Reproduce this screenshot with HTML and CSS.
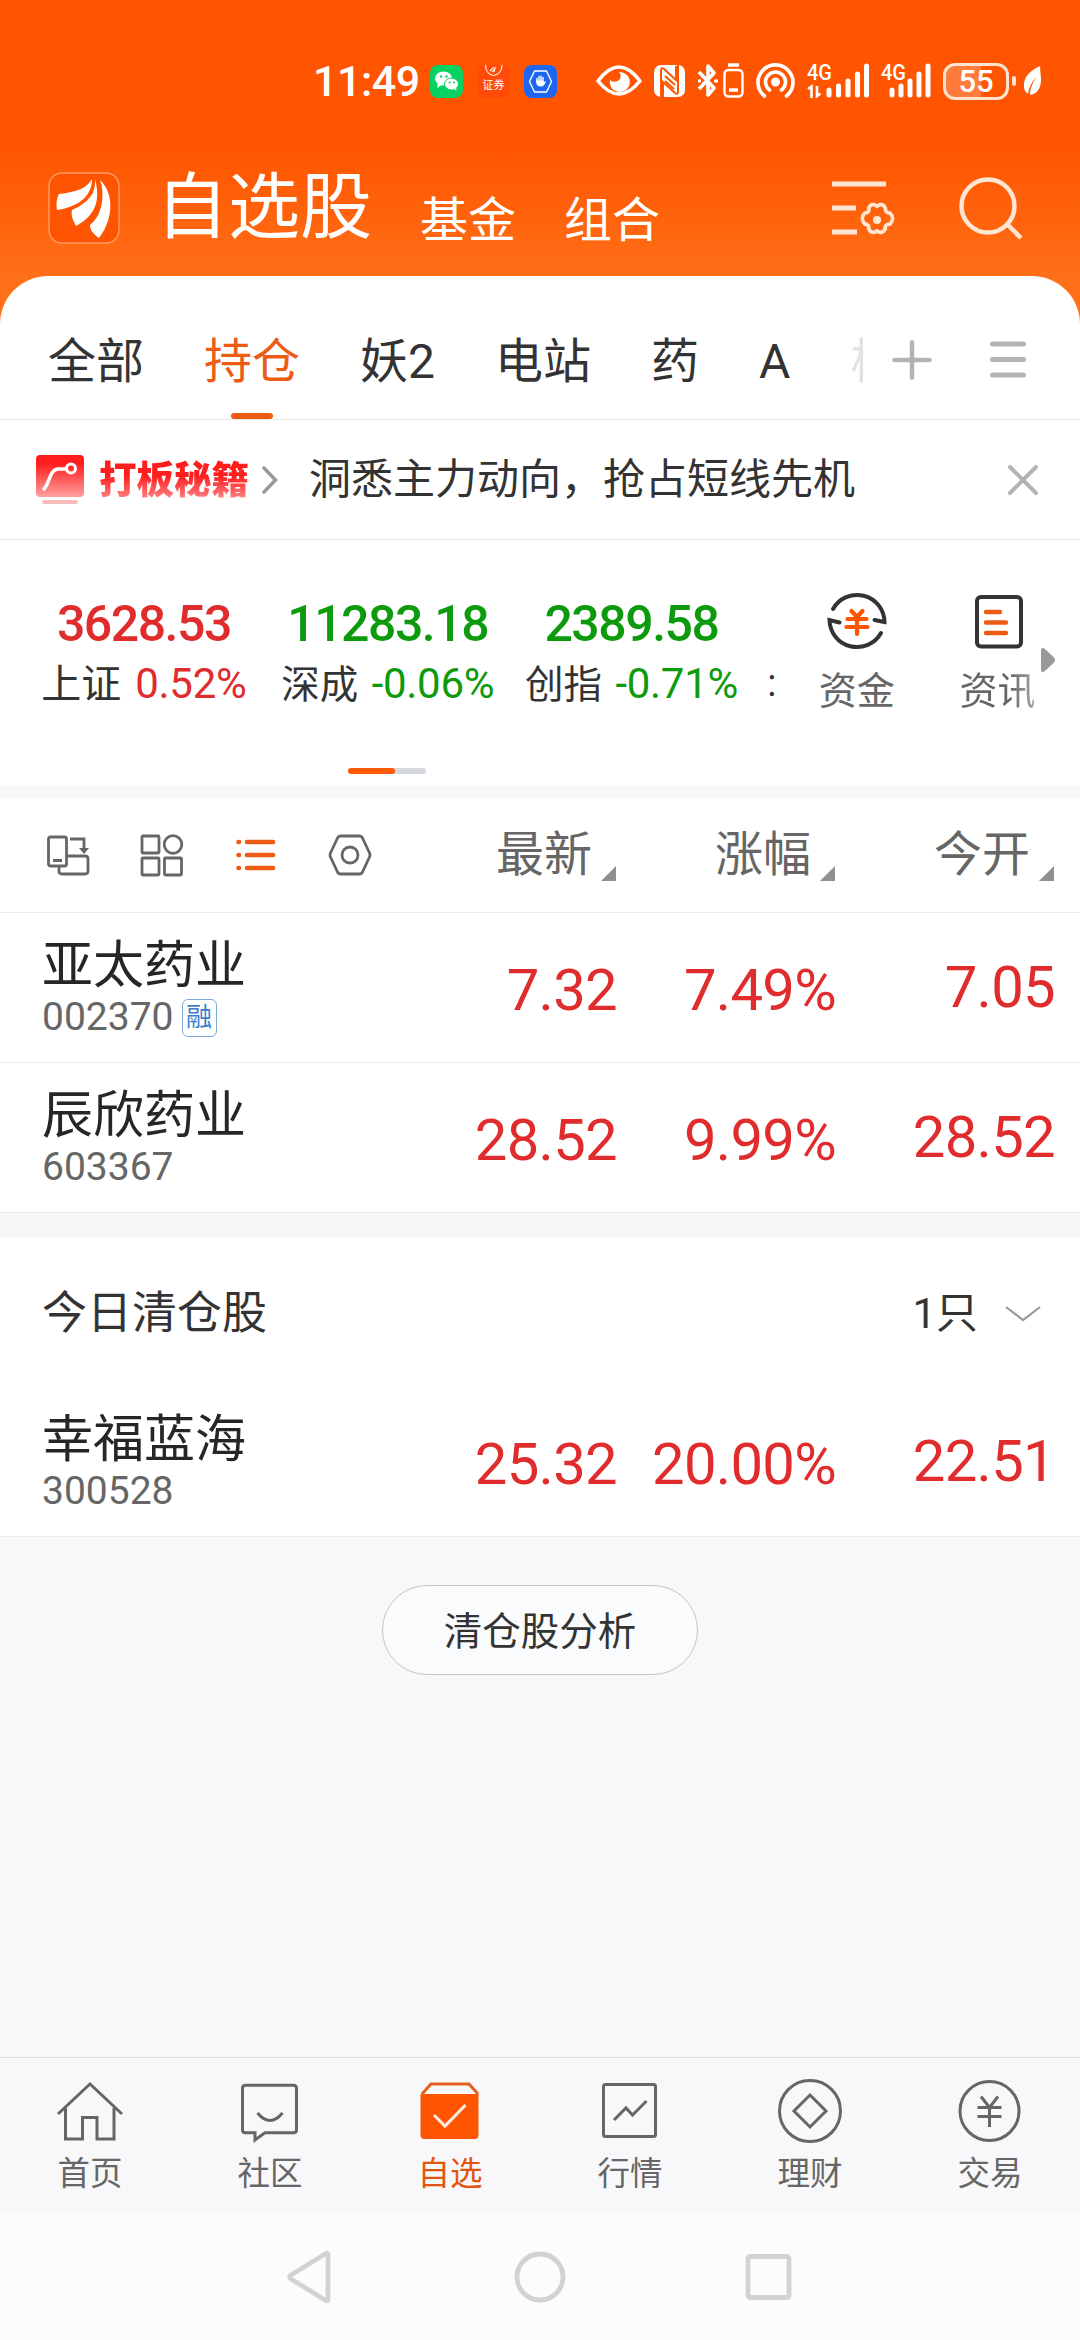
FILE: index.html
```html
<!DOCTYPE html>
<html lang="zh-CN">
<head>
    <meta charset="UTF-8">
    <meta name="viewport" content="width=device-width, initial-scale=1.0">
    <title>自选股</title>
    <link rel="stylesheet" href="styles.css">
</head>
<body>
    <div class="top">
        <div class="status-bar">
            <span class="time">11:49</span>
            <svg class="app-icon" viewBox="0 0 33 33">
                <rect width="33" height="33" rx="8" fill="#07d160"/>
                <ellipse cx="13.500" cy="13.500" rx="8.500" ry="7" fill="#fff"/>
                <path d="M8 18l-1 5 5-3z" fill="#fff"/>
                <ellipse cx="21.500" cy="19" rx="7" ry="6" fill="#fff" stroke="#07d160" stroke-width="1"/>
                <path d="M24 24l2.500 2-.5-4z" fill="#fff"/>
                <circle cx="11" cy="11.500" r="1.200" fill="#07d160"/><circle cx="16.500" cy="11.500" r="1.200" fill="#07d160"/>
                <circle cx="19.500" cy="17.500" r="1" fill="#07d160"/><circle cx="24" cy="17.500" r="1" fill="#07d160"/>
            </svg>
            <span class="app-icon broker">
                <svg viewBox="0 0 33 12"><path d="M8.500 0c0 6 3 9.500 8 10.500 5-1 8.500-4.500 8.500-10.500M13 6l4-4M15 7l4-5M17 7l1-3" fill="none" stroke="#ffe8da" stroke-width="1.200"/></svg>
                <span>证券</span>
            </span>
            <svg class="app-icon" viewBox="0 0 33 33">
                <rect width="33" height="33" rx="8" fill="#1d66f2"/>
                <path d="M10.500 6h12l5 10.500-5 10.500h-12L5.500 16.500z" fill="none" stroke="#fff" stroke-width="1.400" stroke-linejoin="round"/>
                <path d="M13 17v-3.500M15 16v-4.500M17 16v-4.800M19 17v-4.500" stroke="#fff" stroke-width="1.400" stroke-linecap="round"/>
                <path d="M12.300 15.500h7.400v2l1.500-1.500c1 .2.600 1.200 0 2-.8 1.800-1.800 3.500-4.200 3.500-3 0-4.700-1.500-4.700-4z" fill="#fff"/>
            </svg>
            <svg class="st-eye" width="46" height="40" viewBox="0 0 46 40">
                <path d="M2 20Q23-8 44 20Q23 46 2 20z" fill="none" stroke="#fff" stroke-width="3.500" stroke-linejoin="round"/>
                <path d="M23 11a10 10 0 1 1-9 8c3 3 8 2 10-1 1-3 1-5-1-7z" fill="#fff"/>
            </svg>
            <svg class="st-nfc" width="31" height="40" viewBox="0 0 31 40">
                <rect y="4" width="31" height="32" rx="7" fill="#fff"/>
                <path d="M7 36V9q0-3 3-1l12 11V5" fill="none" stroke="#ff5500" stroke-width="2"/>
                <path d="M24 4v27q0 3-3 1L9 21v15M11 15l10 9M11 20l9 8" fill="none" stroke="#ff5500" stroke-width="2"/>
            </svg>
            <svg class="st-bt" width="47" height="40" viewBox="0 0 47 40">
                <path d="M2 11l15 16-6 7V5l6 7L2 28" fill="none" stroke="#fff" stroke-width="3.600" stroke-linejoin="round"/>
                <path d="M1 20h3M17 20h4" stroke="#fff" stroke-width="3"/>
                <rect x="27.500" y="9" width="18" height="26.500" rx="4" fill="none" stroke="#fff" stroke-width="2.400"/>
                <path d="M31 4h11M32 29h9" stroke="#fff" stroke-width="3.500"/>
            </svg>
            <svg class="st-hot" width="39" height="40" viewBox="0 0 39 40">
                <circle cx="19.500" cy="21" r="4.500" fill="#fff"/>
                <path d="M13.500 29a10 10 0 1 1 12 0M8.500 35a17.500 17.500 0 1 1 22 0" fill="none" stroke="#fff" stroke-width="3.600" stroke-linecap="round"/>
            </svg>
            <svg class="st-sig" width="62" height="40" viewBox="0 0 62 40">
                <text x="0" y="19" class="sig-text" textLength="25" lengthAdjust="spacingAndGlyphs">4G</text>
                <path d="M1 28l3.500-2.500V37M10 25v10l3.500-2.500" fill="none" stroke="#fff" stroke-width="2.600"/>
                <path d="M22 29v5M31.500 25v9M41 20v14M50.500 13v21M59.500 5v29" stroke="#fff" stroke-width="5" stroke-linecap="round"/>
            </svg>
            <svg class="st-sig" width="50" height="40" viewBox="0 0 50 40">
                <text x="0" y="19" class="sig-text" textLength="25" lengthAdjust="spacingAndGlyphs">4G</text>
                <path d="M11 29v5M20 25v9M29 20v14M38 13v21M47 5v29" stroke="#fff" stroke-width="5" stroke-linecap="round"/>
            </svg>
            <div class="battery"><span>55</span></div>
            <i class="battery-tip"></i>
            <svg class="st-leaf" width="19" height="40" viewBox="0 0 19 40">
                <path d="M17 5C6 10 0 17 1 26c0 3 2 6 4 7 1-7 4-12 8-17-3 6-6 11-6 18 8-1 11-8 11-15 0-5-1-9-1-14z" fill="#fff"/>
            </svg>
        </div>

        <div class="header">
            <svg class="logo" width="72" height="72" viewBox="0 0 72 72">
                <rect x="1" y="1" width="70" height="70" rx="13" fill="#ff5500" stroke="#ff9a63" stroke-width="1.500"/>
                <path d="M44 7C44 22 34 34 9 38C8 30 9 26 11 22C29 20 39 16 44 7z" fill="#fff"/>
                <path d="M47 7C53 29 47 44 28 54C24 46 23 43 24 38C42 30 48 20 47 7z" fill="#fff"/>
                <path d="M52 8C67 22 65 48 51 66C44 61 42 57 42 53C55 43 57 22 52 8z" fill="#fff"/>
            </svg>
            <h1>自选股</h1>
            <span class="sub-title">基金</span>
            <span class="sub-title">组合</span>
            <svg class="head-set" width="70" height="60" viewBox="0 0 70 60">
                <g fill="none" stroke="#ffe6d2" stroke-width="5">
                    <path d="M5 6h54M5 30h24M5 54h25"/>
                    <path stroke-width="4" stroke-linejoin="round" d="M50 28c3-3 7-3 9 2 0 3 1 5 5 5 4 4 4 7 0 12-4 0-6 2-5 5-2 4-6 5-9 2-3 3-7 2-9-2 1-3-1-5-4-5-4-5-4-8 0-12 3 0 5-2 4-5 2-5 6-5 9-2z" transform="translate(3.500 2.500) scale(.93)"/>
                </g>
                <circle cx="50" cy="42" r="4" fill="#ffe6d2"/>
            </svg>
            <svg class="head-search" width="70" height="66" viewBox="0 0 70 66">
                <circle cx="32" cy="30" r="26.500" fill="none" stroke="#ffe6d2" stroke-width="4.500"/>
                <path d="M51 48l14 14" stroke="#ffe6d2" stroke-width="4.500"/>
            </svg>
        </div>
    </div>

    <div class="panel">
        <div class="tabs">
            <div class="tab-list">
                <span>全部</span>
                <span class="active">持仓</span>
                <span>妖2</span>
                <span>电站</span>
                <span>药</span>
                <span>A</span>
                <span class="fade">板</span>
            </div>
            <svg class="tab-add" width="40" height="40" viewBox="0 0 40 40"><path d="M2.500 20h35M20 2.500v35" stroke="#b3b3b3" stroke-width="4.500" stroke-linecap="round"/></svg>
            <svg class="tab-menu" width="36" height="40" viewBox="0 0 36 40"><path d="M2.500 4h31M2.500 19.500h31M2.500 35h31" stroke="#b3b3b3" stroke-width="5" stroke-linecap="round"/></svg>
        </div>

        <div class="notice">
            <svg width="48" height="50" viewBox="0 0 48 50">
                <defs>
                    <linearGradient id="red" x1="0" y1="0" x2="0" y2="1">
                        <stop offset=".2" stop-color="#ff1d1d"/>
                        <stop offset="1" stop-color="#ffa0a0"/>
                    </linearGradient>
                </defs>
                <rect width="48" height="42" rx="4" fill="url(#red)"/>
                <path d="M8 34c6-6 5-19 14-20h8" fill="none" stroke="#fff" stroke-width="3.500" stroke-linecap="round"/>
                <circle cx="35" cy="13.500" r="4.500" fill="none" stroke="#fff" stroke-width="3"/>
                <rect x="6" y="45" width="36" height="4" rx="2" fill="#f9bcbc"/>
            </svg>
            <b>打板秘籍</b>
            <svg class="notice-go" width="16" height="28" viewBox="0 0 16 28"><path d="M2 2l11.500 12L2 26" fill="none" stroke="#999" stroke-width="3.500" stroke-linecap="round"/></svg>
            <p>洞悉主力动向，抢占短线先机</p>
            <svg class="notice-close" width="30" height="30" viewBox="0 0 30 30"><path d="M2 2l26 26M28 2L2 28" stroke="#b3b3b3" stroke-width="4" stroke-linecap="round"/></svg>
        </div>

        <div class="indexes">
            <div class="index up">
                <strong>3628.53</strong>
                <p>上证 <em>0.52%</em></p>
            </div>
            <div class="index down">
                <strong>11283.18</strong>
                <p>深成 <em>-0.06%</em></p>
            </div>
            <div class="index down">
                <strong>2389.58</strong>
                <p>创指 <em>-0.71%</em></p>
            </div>
            <div class="cut">:</div>
            <div class="quick">
                <svg width="60" height="60" viewBox="0 0 60 60">
                    <path d="M6 18a27.500 27.500 0 0 1 51.500 13l-10-2M54 42A27.500 27.500 0 0 1 2.500 29l10 2.500" fill="none" stroke="#333" stroke-width="4" stroke-linecap="round"/>
                    <path d="M24.500 20l5.500 6 5.500-6M20.500 28h19M19.500 36h21M30 27v16" fill="none" stroke="#ff5500" stroke-width="4.200" stroke-linecap="round"/>
                </svg>
                <span>资金</span>
            </div>
            <div class="quick">
                <svg width="60" height="60" viewBox="0 0 60 60">
                    <rect x="9" y="6" width="44" height="49.500" rx="4" fill="none" stroke="#333" stroke-width="4"/>
                    <path d="M18 21h14M18 31.500h20M18 42h20" stroke="#ec5c14" stroke-width="4.400" stroke-linecap="round"/>
                </svg>
                <span class="last">资讯</span>
            </div>
            <svg class="more" width="16" height="26" viewBox="0 0 16 26"><path d="M1 4q0-5 4-2l9 8.500q2 2.500 0 5L5 24q-4 3-4-2z" fill="#999"/></svg>
            <div class="pager"><i></i></div>
        </div>

        <div class="cols">
            <div class="views">
                <svg width="44" height="44" viewBox="0 0 44 44"><g fill="none" stroke="#666" stroke-width="2.800">
                    <rect x="2.500" y="4" width="18" height="29" rx="2"/><path d="M7 27.500h9M21 23h18q3 0 3 3v12q0 3-3 3H16q-3 0-3-3v-4M24 6h14v12"/></g><path d="M33 15h10l-5 6z" fill="#666"/></svg>
                <svg width="44" height="44" viewBox="0 0 44 44"><g fill="none" stroke="#666" stroke-width="2.800">
                    <rect x="2" y="3" width="17" height="17" rx="1"/><circle cx="33" cy="11.500" r="8.800"/><rect x="2" y="25" width="17" height="17" rx="1"/><rect x="24.500" y="25" width="17" height="17" rx="1"/></g></svg>
                <svg width="44" height="44" viewBox="0 0 44 44"><path d="M13 9h26M13 22h26M13 35h26M4.500 9h.5M4.500 22h.5M4.500 35h.5" stroke="#ec5c14" stroke-width="4.600" stroke-linecap="round"/></svg>
                <svg width="44" height="44" viewBox="0 0 44 44"><path d="M12.500 3h19q2 0 3 2l7 15q1 2 0 4l-7 15q-1 2-3 2h-19q-2 0-3-2l-7-15q-1-2 0-4l7-15q1-2 3-2z" fill="none" stroke="#666" stroke-width="2.800"/><circle cx="22" cy="22" r="8" fill="none" stroke="#666" stroke-width="2.800"/></svg>
            </div>
            <span class="col">最新</span>
            <span class="col">涨幅</span>
            <span class="col">今开</span>
        </div>

        <div class="row">
            <div class="stock">
                <h2>亚太药业</h2>
                <p>002370<span class="tag">融</span></p>
            </div>
            <span class="num">7.32</span>
            <span class="num">7.49%</span>
            <span class="num">7.05</span>
        </div>
        <div class="row">
            <div class="stock">
                <h2>辰欣药业</h2>
                <p>603367</p>
            </div>
            <span class="num">28.52</span>
            <span class="num">9.99%</span>
            <span class="num">28.52</span>
        </div>

        <div class="cleared">
            <span>今日清仓股</span>
            <span class="count">1只</span>
            <svg width="36" height="18" viewBox="0 0 36 18"><path d="M1 2l17 13L35 2" fill="none" stroke="#999" stroke-width="2.200"/></svg>
        </div>
        <div class="row">
            <div class="stock">
                <h2>幸福蓝海</h2>
                <p>300528</p>
            </div>
            <span class="num">25.32</span>
            <span class="num">20.00%</span>
            <span class="num">22.51</span>
        </div>
    </div>

    <div class="blank">
        <button>清仓股分析</button>
    </div>

    <div class="nav">
        <div class="nav-item">
            <svg viewBox="0 0 70 70"><path d="M3 38L35 8l32 30M10.500 32v31H27.500V41.500h14.500V63H59V32"/></svg>
            <span>首页</span>
        </div>
        <div class="nav-item">
            <svg viewBox="0 0 70 70"><path d="M10.500 9.300h48q3 0 3 3v41.500q0 3-3 3H30L20 64v-7.200h-9.500q-3 0-3-3V12.300q0-3 3-3zM22.500 37q12.500 15 25 0"/></svg>
            <span>社区</span>
        </div>
        <div class="nav-item active">
            <svg viewBox="0 0 70 70">
                <path d="M7 18l9-10h38l9 10" stroke="#e2601f"/>
                <path d="M5.500 18h58v41q0 4-4 4h-50q-4 0-4-4z" fill="#ff5500" stroke="none"/>
                <path d="M19 39l11 11 20.500-21" stroke="#ffece0"/>
            </svg>
            <span>自选</span>
        </div>
        <div class="nav-item">
            <svg viewBox="0 0 70 70"><rect x="8.500" y="8.500" width="52" height="52" rx="2"/><path d="M19 44l12-12 6.500 7L51.500 25"/></svg>
            <span>行情</span>
        </div>
        <div class="nav-item">
            <svg viewBox="0 0 70 70"><circle cx="35" cy="35" r="30.500"/><path d="M35 19l16 16-16 16-16-16z"/></svg>
            <span>理财</span>
        </div>
        <div class="nav-item">
            <svg viewBox="0 0 70 70"><circle cx="34.500" cy="35" r="29.500"/><path d="M26 20.500l8.500 11 8.500-11M22.500 31.500h24M22.500 40.500h24M34.500 31v20"/></svg>
            <span>交易</span>
        </div>
    </div>

    <div class="sys-nav">
        <svg viewBox="0 0 56 56"><path d="M42 5q3-2 3 1v44q0 3-3 1L8 30q-3-2 0-4z"/></svg>
        <svg viewBox="0 0 56 56"><circle cx="28" cy="28" r="23"/></svg>
        <svg viewBox="0 0 56 56"><rect x="7" y="7.500" width="41" height="41" rx="2"/></svg>
    </div>
</body>
</html>
```

FILE: styles.css
```css
* {
    box-sizing: border-box;
    margin: 0;
    padding: 0;
}
body {
    width: 1080px;
    height: 2340px;
    overflow: hidden;
    display: flex;
    flex-direction: column;
    background: #f7f8fa;
    color: #333;
    font-family: Roboto, "Noto Sans CJK SC", sans-serif;
}
svg {
    display: block;
    flex-shrink: 0;
}

/* orange top */
.top {
    height: 324px;
    margin-bottom: -48px;
    background: linear-gradient(#ff5500 150px, #ff6f18 276px);
}
.status-bar {
    height: 140px;
    padding: 22px 0 0 313px;
    display: flex;
    align-items: center;
    color: #fff;
}
.time {
    width: 117px;
    font-size: 43px;
    font-weight: 500;
    line-height: 40px;
    letter-spacing: -0.5px;
}
.app-icon {
    width: 33px;
    height: 33px;
    margin-right: 14px;
}
.broker {
    display: block;
    background: #ff4a08;
    border-radius: 8px;
    font-size: 11px;
    line-height: 17px;
    text-align: center;
}
.broker svg {
    width: 33px;
    height: 12px;
}
.broker span {
    display: block;
}
.st-eye {
    margin-left: 25px;
}
.st-nfc, .st-bt {
    margin-left: 12px;
}
.st-hot {
    margin-left: 12px;
}
.st-sig {
    margin-left: 12px;
}
.sig-text {
    font-size: 22px;
    font-weight: 500;
    fill: #fff;
}
.battery {
    width: 66px;
    height: 37px;
    margin-left: 12px;
    border: 3px solid #ffe3d0;
    border-radius: 12px;
    background: linear-gradient(90deg, #ff7b3c 59%, #ff5500 59%);
    font-size: 31px;
    font-weight: 500;
    line-height: 32px;
    text-align: center;
}
.battery-tip {
    width: 4px;
    height: 10px;
    margin: 0 7px 0 3px;
    border-radius: 2px;
    background: #ffe3d0;
}
.header {
    height: 136px;
    padding: 0 54px 0 48px;
    display: flex;
    align-items: center;
    color: #fff;
}
h1 {
    margin: 0 48px 0 36px;
    font-size: 72px;
    font-weight: 400;
    line-height: 80px;
}
.sub-title {
    margin: 26px 48px 0 0;
    font-size: 48px;
    line-height: 56px;
}
.head-set {
    margin-left: auto;
}
.head-search {
    margin: 2px 0 0 59px;
}

/* white panel */
.panel {
    background: #fff;
    border-radius: 48px 48px 0 0;
}
.tabs {
    height: 144px;
    padding: 28px 54px 0 48px;
    display: flex;
    align-items: center;
    border-bottom: 1px solid #e6e6e6;
}
.tab-list {
    width: 815px;
    height: 115px;
    display: flex;
    gap: 60px;
    overflow: hidden;
    font-size: 48px;
    line-height: 115px;
    white-space: nowrap;
}
.tab-list span {
    position: relative;
}
.tab-list .active {
    color: #ec5c14;
}
.tab-list .active::after {
    content: "";
    position: absolute;
    left: 27px;
    bottom: 0;
    width: 42px;
    height: 6px;
    border-radius: 3px;
    background: #ec5c14;
}
.tab-list .fade {
    color: #e2e2e2;
}
.tab-add {
    margin: -4px 0 0 29px;
}
.tab-menu {
    margin: -3px 0 0 auto;
}
.notice {
    height: 120px;
    padding: 0 42px 0 36px;
    display: flex;
    align-items: center;
    border-bottom: 1px solid #e6e6e6;
}
.notice b {
    width: 150px;
    margin-left: 15px;
    font-size: 37.500px;
    font-weight: 900;
    line-height: 44px;
    background: linear-gradient(#ff1d1d 40%, #ff9090 100%);
    -webkit-background-clip: text;
    background-clip: text;
    color: transparent;
}
.notice-go {
    margin: 0 31px 0 13px;
}
.notice p {
    font-size: 42px;
    line-height: 50px;
}
.notice-close {
    margin-left: auto;
}

.indexes {
    position: relative;
    height: 258px;
    padding: 54px 12px 0 22px;
    display: flex;
    border-bottom: 12px solid #f6f7f9;
}
.index {
    width: 244px;
    text-align: center;
    white-space: nowrap;
}
.index strong {
    display: block;
    font-size: 50px;
    font-weight: 500;
    line-height: 60px;
    letter-spacing: -1.500px;
}
.index p {
    margin-top: 6px;
    font-size: 38.500px;
    line-height: 48px;
}
.index em {
    margin-left: 4px;
    font-style: normal;
    font-size: 42px;
    letter-spacing: -0.3px;
}
.index:first-child p {
    font-size: 40px;
}
.up strong, .up em {
    color: #e02c2c;
}
.down strong, .down em {
    color: #0d9b0d;
}
.cut {
    width: 9px;
    height: 48px;
    margin: 65px 10px 0 14px;
    overflow: hidden;
    font-size: 38px;
    line-height: 48px;
}
.quick {
    width: 141px;
    margin-top: -3px;
    display: flex;
    flex-direction: column;
    align-items: center;
    font-size: 38px;
    line-height: 44px;
    color: #666;
}
.quick span {
    margin-top: 18px;
}
.quick .last {
    background: linear-gradient(90deg, #666 65%, #aaa);
    -webkit-background-clip: text;
    background-clip: text;
    color: transparent;
}
.more {
    position: absolute;
    right: 24px;
    top: 107px;
}
.pager {
    position: absolute;
    left: 348px;
    bottom: 12px;
    width: 78px;
    height: 6px;
    border-radius: 3px;
    background: #d5d8dd;
}
.pager i {
    display: block;
    width: 47px;
    height: 6px;
    border-radius: 3px;
    background: #ff5a08;
}

/* stock list */
.cols {
    height: 115px;
    padding: 0 26px 0 46px;
    display: flex;
    align-items: center;
    border-bottom: 1px solid #ececec;
}
.views {
    flex: 1;
    display: flex;
    gap: 50px;
}
.col {
    width: 219px;
    display: flex;
    justify-content: flex-end;
    align-items: flex-end;
    font-size: 48px;
    line-height: 60px;
    color: #666;
}
.col::after {
    content: "";
    margin: 0 0 4px 9px;
    border-left: 15px solid transparent;
    border-bottom: 15px solid #8f8f94;
}
.row {
    height: 150px;
    padding: 0 25px 0 42px;
    display: flex;
    align-items: center;
    border-bottom: 1px solid #ececec;
}
.stock {
    flex: 1;
}
.stock h2 {
    font-size: 51px;
    font-weight: 400;
    line-height: 58px;
    color: #262626;
}
.stock p {
    display: flex;
    align-items: center;
    font-size: 39px;
    line-height: 44px;
    color: #666;
}
.tag {
    width: 35px;
    height: 38px;
    margin: 3px 0 0 8px;
    border: 1.500px solid #7ea9d6;
    border-radius: 6px;
    font-size: 26px;
    line-height: 35px;
    text-align: center;
    color: #3d7fc6;
}
.num {
    width: 219px;
    padding-top: 5px;
    font-size: 58px;
    line-height: 60px;
    letter-spacing: -0.7px;
    text-align: right;
    white-space: nowrap;
    color: #e02c2c;
}
.num:last-child {
    padding: 0 0 1px;
}
.cleared {
    height: 174px;
    padding: 3px 39px 0 42px;
    display: flex;
    align-items: center;
    border-top: 24px solid #f6f7f9;
    font-size: 45px;
    line-height: 60px;
}
.count {
    margin: 0 27px 0 auto;
    font-size: 42px;
}

.blank {
    flex: 1;
    padding-top: 48px;
    text-align: center;
}
button {
    width: 316px;
    height: 90px;
    padding-bottom: 4px;
    border: 1px solid #c4c4c6;
    border-radius: 45px;
    background: #fafbfc;
    color: #333;
    font-family: inherit;
    font-size: 38.500px;
}

.nav {
    height: 157px;
    padding-top: 18px;
    display: flex;
    background: #f8f8fa;
    border-top: 1px solid #e2e2e4;
}
.nav-item {
    width: 180px;
    display: flex;
    flex-direction: column;
    align-items: center;
    font-size: 32.500px;
    line-height: 40px;
    color: #666;
}
.nav-item svg {
    width: 70px;
    height: 70px;
    margin-bottom: 8px;
    fill: none;
    stroke: #666;
    stroke-width: 3;
}
.nav-item.active {
    color: #e0560f;
}
.sys-nav {
    height: 126px;
    display: flex;
    justify-content: center;
    gap: 173px;
    padding-top: 35px;
    background: #fcfcfc;
}
.sys-nav svg {
    width: 56px;
    height: 56px;
    fill: none;
    stroke: #d2d2d2;
    stroke-width: 4.800;
}
```
